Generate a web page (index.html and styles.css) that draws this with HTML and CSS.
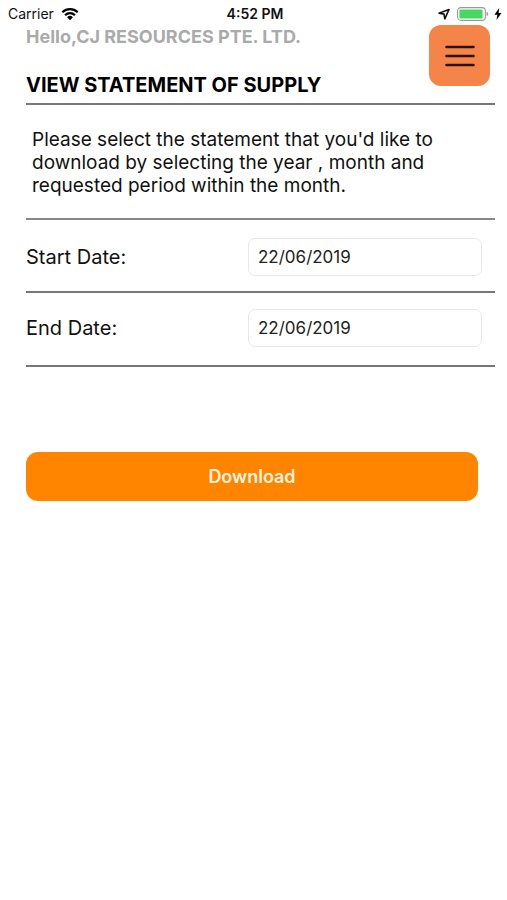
FILE: index.html
```html
<!DOCTYPE html>
<html lang="en">
<head>
<meta charset="utf-8">
<meta name="viewport" content="width=device-width, initial-scale=1">
<title>View Statement of Supply</title>
<link rel="stylesheet" href="styles.css">
</head>
<body>
<div class="status">
  <div class="status-left">
    <span>Carrier</span>
    <svg class="wifi" viewBox="0 0 18 14" aria-hidden="true">
      <path d="M1.3 5.3a11 11 0 0 1 15.4 0M4.1 8.2a7 7 0 0 1 9.8 0" fill="none" stroke="#000" stroke-width="2.3"/>
      <path d="M9 13.2 6.1 10.2a4.1 4.1 0 0 1 5.8 0z"/>
    </svg>
  </div>
  <span class="time">4:52 PM</span>
  <div class="status-right">
    <svg class="location" viewBox="0 0 12 12" aria-hidden="true">
      <path d="M1 5.2 11 1.5 6.8 10.8 6 6.1z" fill="none" stroke="#111" stroke-width="1.6" stroke-linejoin="round"/>
    </svg>
    <svg class="battery" viewBox="0 0 32 14" aria-hidden="true">
      <rect x=".6" y=".6" width="27.8" height="12.8" rx="3.4" fill="#fff" stroke="#999" stroke-width="1.1"/>
      <rect x="2.4" y="2.4" width="23.2" height="9.2" rx="1.2" fill="#47d764"/>
      <path d="M29.6 4.8q1.7.6 1.7 2.2t-1.7 2.2z" fill="#999"/>
    </svg>
    <svg class="bolt" viewBox="0 0 8 12" aria-hidden="true">
      <path d="M5.2 0 .4 6.7h2.9L2.5 12l5-7.1H4.6z"/>
    </svg>
  </div>
</div>
<main class="page">
  <button class="menu" type="button" aria-label="Menu">
    <svg viewBox="0 0 30 24" aria-hidden="true">
      <path d="M1.5 3h27M1.5 12h27M1.5 21h27" fill="none" stroke="#2b1208" stroke-width="2.6" stroke-linecap="round"/>
    </svg>
  </button>
  <p class="greeting">Hello,CJ RESOURCES PTE. LTD.</p>
  <h1 class="title">VIEW STATEMENT OF SUPPLY</h1>
  <p class="intro">Please select the statement that you'd like to download by selecting the year , month and requested period within the month.</p>
  <form>
    <div class="row">
      <label for="start">Start Date:</label>
      <input id="start" type="text" value="22/06/2019">
    </div>
    <div class="row">
      <label for="end">End Date:</label>
      <input id="end" type="text" value="22/06/2019">
    </div>
    <button class="download" type="button">Download</button>
  </form>
</main>
</body>
</html>
```
FILE: styles.css
```css
* {
  box-sizing: border-box;
}

body {
  margin: 0;
  background: #fff;
  color: #111;
  font-family: Inter, "Liberation Sans", sans-serif;
}

p,
h1 {
  margin: 0;
}

svg {
  display: block;
}

.status {
  display: grid;
  grid-template-columns: 1fr auto 1fr;
  align-items: center;
  height: 25px;
  padding: 2px 5px 0 8px;
  font-size: 14px;
  line-height: 23px;
}

.status-left,
.status-right {
  display: flex;
  align-items: center;
}

.status-left {
  gap: 7px;
}

.status-right {
  justify-content: flex-end;
  gap: 5px;
}

.time {
  font-weight: 600;
}

.wifi {
  width: 18px;
  height: 14px;
}

.location {
  width: 12px;
  height: 12px;
  margin-right: 2px;
}

.battery {
  width: 32px;
  height: 14px;
}

.bolt {
  width: 8px;
  height: 12px;
}

.page {
  position: relative;
  padding: 0 12px 0 26px;
}

.menu {
  position: absolute;
  top: 0;
  right: 17px;
  display: grid;
  place-items: center;
  width: 61px;
  height: 61px;
  padding: 0;
  border: 0;
  border-radius: 12px;
  background: #f58449;
}

.menu svg {
  width: 30px;
  height: 24px;
}

.greeting {
  color: #aaa;
  font-size: 18px;
  font-weight: 700;
  line-height: 24px;
}

.title {
  padding: 24px 0 5px;
  border-bottom: 2px solid #777;
  color: #000;
  font-size: 20px;
  font-weight: 700;
  line-height: 25px;
}

.intro {
  padding: 23px 40px 21px 6px;
  border-bottom: 2px solid #888;
  font-size: 19px;
  line-height: 23px;
}

.row {
  display: grid;
  grid-template-columns: 222px 1fr;
  align-items: center;
  padding: 18px 13px 15px 0;
  border-bottom: 2px solid #777;
  font-size: 20px;
}

.row + .row {
  padding-top: 16px;
  padding-bottom: 18px;
}

.row input {
  width: 100%;
  height: 38px;
  padding: 0 9px;
  border: 1px solid #e8e8e8;
  border-radius: 7px;
  background: #fff;
  color: #222;
  font-family: inherit;
  font-size: 17px;
}

.download {
  display: block;
  width: calc(100% - 17px);
  height: 49px;
  margin-top: 85px;
  border: 0;
  border-radius: 12px;
  background: #ff8500;
  color: #fff3df;
  font-family: inherit;
  font-size: 18px;
  font-weight: 600;
}
```
